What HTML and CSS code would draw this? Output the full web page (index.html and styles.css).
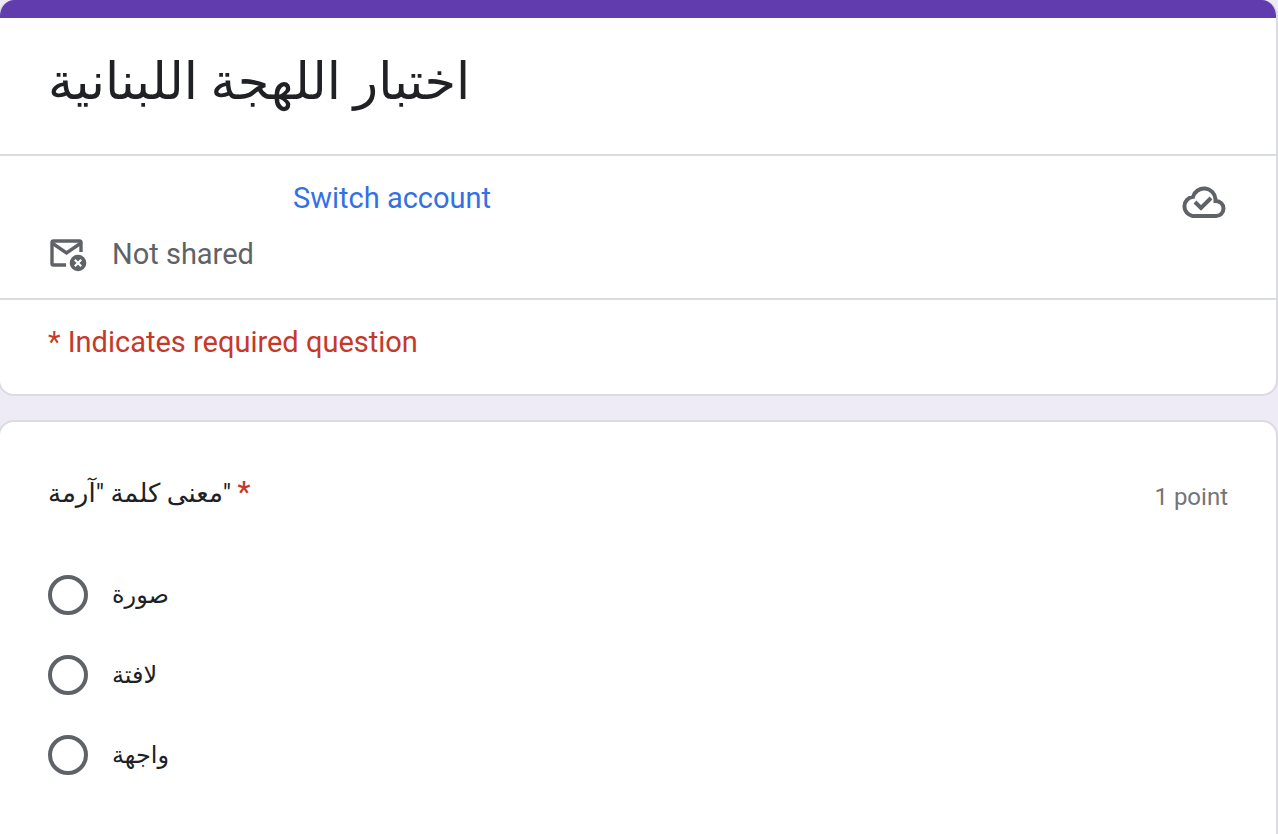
FILE: index.html
```html
<!DOCTYPE html>
<html lang="en">
<head>
<meta charset="utf-8">
<meta name="viewport" content="width=device-width, initial-scale=1">
<title>اختبار اللهجة اللبنانية</title>
<link rel="stylesheet" href="styles.css">
</head>
<body>
<form class="form">
  <header class="card card-header">
    <div class="title-row">
      <h1 class="title">اختبار اللهجة اللبنانية</h1>
    </div>
    <div class="account">
      <div class="account-info">
        <div class="account-line">
          <a class="switch" href="#">Switch account</a>
        </div>
        <div class="shared-line">
          <svg class="mail-icon" viewBox="0 0 40 40" fill="none" aria-hidden="true">
            <path d="M18 31H5.500Q4 31 4 29.500V8.500Q4 7 5.500 7H31.500Q33 7 33 8.500V18" stroke="currentColor" stroke-width="3.400"/>
            <path d="M4 9L18.500 19L33 9" stroke="currentColor" stroke-width="3.400"/>
            <circle cx="30" cy="29" r="8.300" fill="currentColor"/>
            <path d="M26.800 25.800L33.200 32.200M33.200 25.800L26.800 32.200" stroke="#fff" stroke-width="2.200"/>
          </svg>
          <span>Not shared</span>
        </div>
      </div>
      <svg class="cloud-icon" viewBox="0 0 44 48" fill="none" stroke="currentColor" stroke-width="4" aria-hidden="true">
        <path d="M10.500 38H34A7.500 7.500 0 0 0 34 23H33.500V21A11.500 11.500 0 0 0 11 18.800A9.700 9.700 0 0 0 10.500 38Z"/>
        <path d="M13 24L19 30L29 20"/>
      </svg>
    </div>
    <p class="required-note">* Indicates required question</p>
  </header>

  <section class="card question" role="radiogroup" aria-labelledby="q1">
    <div class="question-head">
      <h2 class="question-title" id="q1">معنى كلمة "آرمة" <span class="star">*</span></h2>
      <span class="points">1 point</span>
    </div>
    <div class="options">
      <label class="option"><input class="radio" type="radio" name="q1"><span>صورة</span></label>
      <label class="option"><input class="radio" type="radio" name="q1"><span>لافتة</span></label>
      <label class="option"><input class="radio" type="radio" name="q1"><span>واجهة</span></label>
    </div>
  </section>
</form>
</body>
</html>
```
FILE: styles.css
```css
* {
  box-sizing: border-box;
}

body {
  margin: 0;
  background: #eeeaf6;
  color: #202124;
  font-family: Roboto, "DejaVu Sans", sans-serif;
  font-size: 29px;
  line-height: 40px;
  overflow: hidden;
}

.form {
  display: flex;
  flex-direction: column;
  gap: 24px;
  min-height: 100vh;
  margin-left: -2px;
}

.card {
  background: #fff;
  border: 2px solid #dadce0;
  border-radius: 16px;
}

.card-header {
  border-top: 0;
  overflow: hidden;
}

.title-row {
  padding: 24px 48px 32px;
  border-top: 18px solid #613caf;
  border-bottom: 2px solid #dadce0;
}

.title {
  margin: 0;
  font-size: 51px;
  font-weight: 400;
  line-height: 80px;
}

.account {
  display: flex;
  justify-content: space-between;
  align-items: flex-start;
  padding: 22px 50px 24px 48px;
  border-bottom: 2px solid #dadce0;
  color: #5f6368;
}

.account-info {
  display: flex;
  flex-direction: column;
  gap: 16px;
}

.account-line {
  padding-left: 245px;
}

.switch {
  color: #3470e4;
  text-decoration: none;
}

.shared-line {
  display: flex;
  align-items: center;
  gap: 24px;
}

.mail-icon {
  width: 40px;
  height: 40px;
}

.cloud-icon {
  width: 44px;
  height: 48px;
}

.required-note {
  margin: 0;
  padding: 22px 48px 32px;
  color: #c5392b;
}

.question {
  flex: 1;
  border-bottom: 0;
  border-bottom-left-radius: 0;
  border-bottom-right-radius: 0;
  padding: 46px 48px 40px;
}

.question-head {
  display: flex;
  justify-content: space-between;
  align-items: flex-end;
}

.question-title {
  margin: 0;
  font-size: 26px;
  font-weight: 400;
  line-height: 48px;
}

.star {
  color: #c5392b;
  font-size: 29px;
  font-weight: 500;
}

.points {
  color: #757575;
  font-size: 24px;
}

.options {
  display: flex;
  flex-direction: column;
  gap: 40px;
  padding-top: 58px;
}

.option {
  display: flex;
  align-items: center;
  gap: 24px;
  font-size: 24px;
}

.radio {
  appearance: none;
  width: 40px;
  height: 40px;
  margin: 0;
  border: 4px solid #5f6368;
  border-radius: 50%;
}

.radio:checked {
  background: radial-gradient(#613caf 50%, #fff 55%);
  border-color: #613caf;
}
```
